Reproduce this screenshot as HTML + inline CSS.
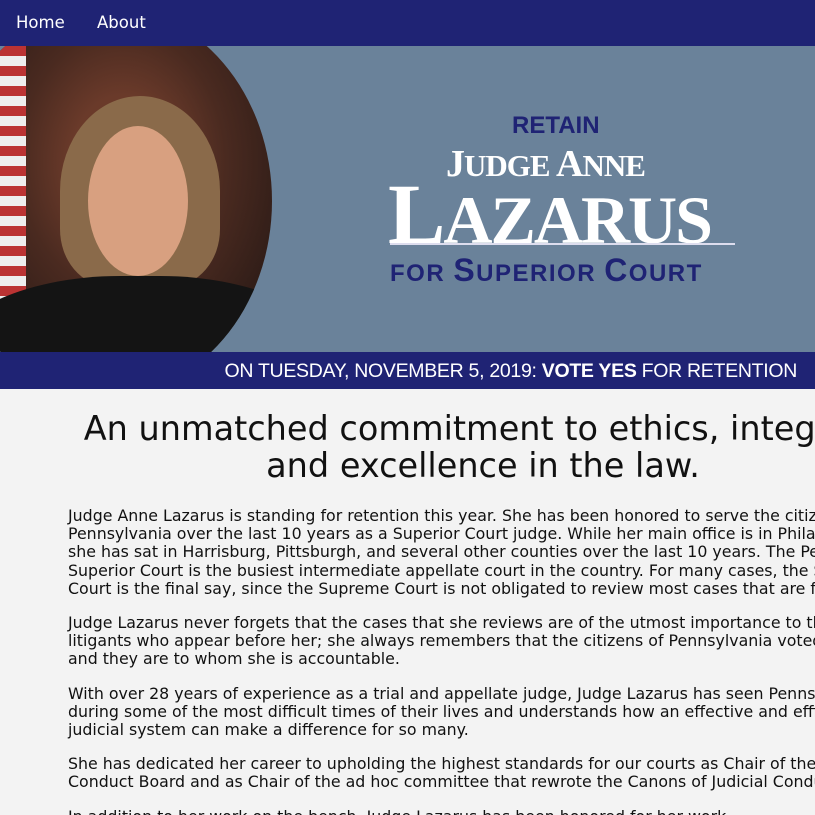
<!DOCTYPE html>
<html><head><meta charset="utf-8"><style>
html,body{margin:0;padding:0;width:815px;height:815px;overflow:hidden;background:#f3f3f3;font-family:"DejaVu Sans",sans-serif}
.nav{height:46px;background:#1f2374;color:#fff;font-size:16.5px;position:relative}
.nav span{position:absolute;top:13px}
.banner{position:relative;height:306px;background:#6a829a;overflow:hidden}
.photo{position:absolute;left:-60px;top:-40px;width:332px;height:390px;border-radius:50%;background:radial-gradient(ellipse at 55% 40%,#6a3a2a 0 20%,#4a2a20 40%,#2a1a16 70%);overflow:hidden}
.robe{position:absolute;left:0;top:270px;width:400px;height:200px;background:#141414;border-radius:45% 45% 0 0}
.face{position:absolute;left:148px;top:120px;width:100px;height:150px;border-radius:50%;background:#d8a080}
.hair{position:absolute;left:120px;top:90px;width:160px;height:190px;border-radius:50% 50% 30% 30%;background:#8a6a4a}
.flag{position:absolute;left:60px;top:40px;width:26px;height:300px;background:repeating-linear-gradient(#b33 0 10px,#eee 10px 20px)}
.t{position:absolute;color:#fff;font-family:"Liberation Serif",serif;white-space:nowrap}
.bar{height:37px;background:#1f2374;color:#fff;font-family:"Liberation Sans",sans-serif;font-size:19.5px;letter-spacing:-0.3px;text-align:right;padding-right:18px;line-height:39px;box-sizing:border-box}
.wrap{position:absolute;left:0;top:389px;width:815px;height:426px;overflow:hidden}
.main{position:absolute;left:68px;top:21px;width:900px;color:#111}
h1{font-weight:normal;font-size:33.5px;line-height:37px;text-align:center;margin:0 0 23px;width:830px;white-space:nowrap}
p{font-size:15.8px;line-height:18.2px;margin:0 0 16px;white-space:nowrap}
</style></head><body>
<div class="nav"><span style="left:16px">Home</span><span style="left:97px">About</span></div>
<div class="banner">
 <div class="photo"><div class="flag"></div><div class="hair"></div><div class="face"></div><div class="robe"></div></div>
 <div class="t" style="left:512px;top:66px;font-family:'Liberation Sans',sans-serif;font-weight:bold;color:#1f2374;font-size:24px">RETAIN</div>
 <div class="t" style="left:446px;top:96px;font-size:38px;font-weight:bold;letter-spacing:-1px">J<span style="font-size:31px">UDGE</span> A<span style="font-size:31px">NNE</span></div>
 <div class="t" style="left:388px;top:118px;font-size:86px;font-weight:bold;letter-spacing:-2px">L<span style="font-size:68px">AZARUS</span></div>
 <div style="position:absolute;left:390px;top:197px;width:345px;height:2px;background:#dde"></div>
 <div class="t" style="left:390px;top:206px;font-family:'Liberation Sans',sans-serif;font-weight:bold;color:#1f2374;font-size:24px;letter-spacing:1.5px">FOR <span style="font-size:32px">S</span>UPERIOR <span style="font-size:32px">C</span>OURT</div>
</div>
<div class="bar">ON TUESDAY, NOVEMBER 5, 2019: <b>VOTE YES</b> FOR RETENTION</div>
<div class="wrap"><div class="main">
<h1>An unmatched commitment to ethics, integrity,<br>and excellence in the law.</h1>
<p>Judge Anne Lazarus is standing for retention this year. She has been honored to serve the citizens of<br>Pennsylvania over the last 10 years as a Superior Court judge. While her main office is in Philadelphia,<br>she has sat in Harrisburg, Pittsburgh, and several other counties over the last 10 years. The Pennsylvania<br>Superior Court is the busiest intermediate appellate court in the country. For many cases, the Superior<br>Court is the final say, since the Supreme Court is not obligated to review most cases that are filed.</p>
<p>Judge Lazarus never forgets that the cases that she reviews are of the utmost importance to the<br>litigants who appear before her; she always remembers that the citizens of Pennsylvania voted for her,<br>and they are to whom she is accountable.</p>
<p>With over 28 years of experience as a trial and appellate judge, Judge Lazarus has seen Pennsylvanians<br>during some of the most difficult times of their lives and understands how an effective and efficient<br>judicial system can make a difference for so many.</p>
<p>She has dedicated her career to upholding the highest standards for our courts as Chair of the Judicial<br>Conduct Board and as Chair of the ad hoc committee that rewrote the Canons of Judicial Conduct.</p>
<p>In addition to her work on the bench, Judge Lazarus has been honored for her work</p>
</div></div>
</body></html>
